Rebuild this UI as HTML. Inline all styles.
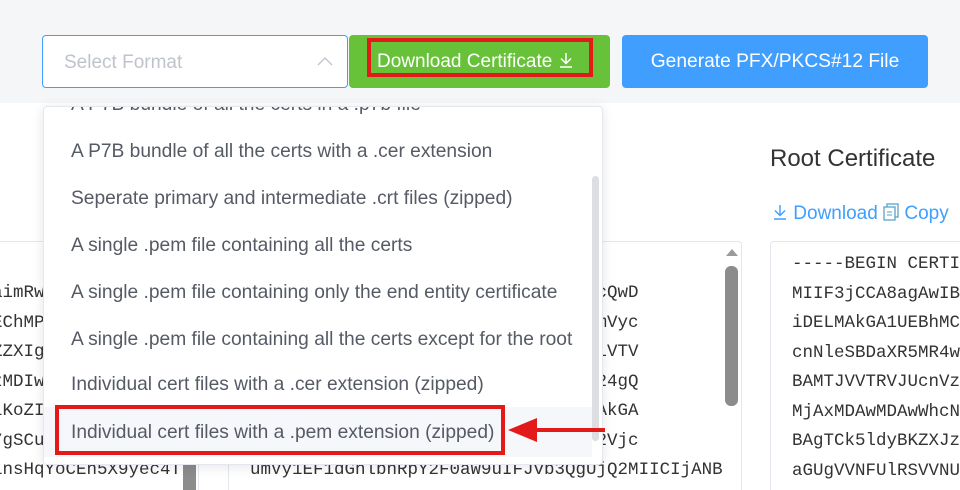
<!DOCTYPE html>
<html style="overflow:hidden;height:490px"><head><meta charset="utf-8"><style>
body{margin:0;width:960px;height:490px;overflow:hidden;background:#fff;font-family:"Liberation Sans",sans-serif;position:relative}
.band{position:absolute;left:0;top:0;width:960px;height:103px;background:#f5f6f8}
.sel{position:absolute;left:42px;top:35px;width:306px;height:53px;border:1px solid #409eff;border-radius:4px;background:#fff;box-sizing:border-box}
.sel span{position:absolute;left:21px;top:16px;font-size:19px;color:#bfc3cb}
.btn{position:absolute;border-radius:4px;color:#fff;font-size:19.2px;text-align:center;box-sizing:border-box}
.green{left:349px;top:35px;width:261px;height:53px;background:#67c23a}
.redbox{position:absolute;left:367px;top:38px;width:226px;height:39px;border:4px solid #e21a1a;box-sizing:border-box}
.blue{left:622px;top:35px;width:306px;height:53px;background:#409eff;line-height:53px}
.mono{font-family:"Liberation Mono",monospace;font-size:17.5px;color:#333;position:absolute;line-height:29.5px;white-space:pre;overflow:hidden}
.panel{position:absolute;border:1px solid #e4e7ed;border-bottom:none;border-radius:4px 4px 0 0;box-sizing:border-box}
.dd{position:absolute;left:43px;top:106px;width:558px;height:357px;background:#fff;border:1px solid #e4e7ed;border-radius:4px;box-shadow:0 2px 12px rgba(0,0,0,.1);overflow:hidden}
.it{position:absolute;left:27px;font-size:19.2px;color:#555a64;white-space:nowrap}
</style></head><body>
<div class="band"></div>
<div class="sel"><span>Select Format</span>
<svg style="position:absolute;left:274px;top:20px" width="16" height="12"><path d="M1 9 L8 2 L15 9" fill="none" stroke="#bfc3cb" stroke-width="1.3"/></svg></div>
<div class="btn green"></div>
<div class="redbox"></div>
<div style="position:absolute;left:377px;top:51px;font-size:19px;color:#fff">Download Certificate <svg width="16" height="16" style="vertical-align:-1px"><path d="M8 1 V11 M3 6.5 L8 11.5 L13 6.5 M2 15 H14" fill="none" stroke="#fff" stroke-width="1.5"/></svg></div>
<div class="btn blue">Generate PFX/PKCS#12 File</div>

<div style="position:absolute;left:770px;top:145px;font-size:24px;color:#333">Root Certificate</div>
<div style="position:absolute;left:772px;top:203px;font-size:19px;color:#409eff"><svg width="16" height="16" style="vertical-align:-1px"><path d="M8 1 V11 M3 6.5 L8 11.5 L13 6.5 M2 15 H14" fill="none" stroke="#409eff" stroke-width="1.4"/></svg> Download <svg width="16" height="18" style="vertical-align:-2px"><rect x="4" y="1" width="11" height="13" fill="none" stroke="#5aa3c8" stroke-width="1.3"/><rect x="1" y="4" width="11" height="13" fill="#fff" stroke="#5aa3c8" stroke-width="1.3"/><path d="M4 9H9M4 12H9" stroke="#5aa3c8"/></svg> Copy</div>

<div class="panel" style="left:-5px;top:241px;width:204px;height:249px"></div>
<div style="position:absolute;left:183px;top:440px;width:13px;height:50px;background:#8c8c8c"></div>
<div class="mono" style="left:-8px;top:279px;width:190px;height:211px">aimRw
EChMP
ZZXIg
zMDIw
lKoZI
7gSCu
insHqYoCEn5X9yec4T
ki.J6Bl.(q+Kf.1.EF5</div>

<div class="panel" style="left:228px;top:241px;width:514px;height:249px"></div>
<div style="position:absolute;left:725px;top:266px;width:13px;height:140px;background:#8c8c8c;border-radius:6px"></div>
<svg style="position:absolute;left:725px;top:247px" width="14" height="10"><path d="M1 9 L7 2 L13 9Z" fill="#9a9a9a"/></svg>
<div class="mono" style="left:250px;top:279px;width:472px;height:211px">                         q1hSVhgmcQwD
                         wpOZXcgSmVyc
                         FVTRVJUUlVTV
                         mljYXRpb24gQ
                         VowXzELMAkGA
                         1UEAxMtU2Vjc
umVy1EF1dGhlbnRpY2F0aW9uIFJvb3QgUjQ2MIICIjANB
A-DAMIICC-KCA-EAl77VNl2IDAE.iuQ.US</div>

<div class="panel" style="left:770px;top:241px;width:220px;height:249px"></div>
<div class="mono" style="left:792px;top:250px;width:168px;height:240px">-----BEGIN CERTI
MIIF3jCCA8agAwIB
iDELMAkGA1UEBhMC
cnNleSBDaXR5MR4w
BAMTJVVTRVJUcnVz
MjAxMDAwMDAwWhcN
BAgTCk5ldyBKZXJz
aGUgVVNFUlRSVVNU
dGlmaWNhdGlvbiBB</div>

<div class="dd">
<div class="it" style="top:-13px">A P7B bundle of all the certs in a .p7b file</div>
<div class="it" style="top:34px">A P7B bundle of all the certs with a .cer extension</div>
<div class="it" style="top:81px">Seperate primary and intermediate .crt files (zipped)</div>
<div class="it" style="top:128px">A single .pem file containing all the certs</div>
<div class="it" style="top:175px">A single .pem file containing only the end entity certificate</div>
<div class="it" style="top:222px">A single .pem file containing all the certs except for the root</div>
<div class="it" style="top:267px">Individual cert files with a .cer extension (zipped)</div>
<div style="position:absolute;left:0;top:300px;width:548px;height:50px;background:#f5f7fa"></div>
<div class="it" style="top:315px">Individual cert files with a .pem extension (zipped)</div>
<div style="position:absolute;left:548px;top:69px;width:7px;height:265px;background:#dcdee3;border-radius:4px"></div>
</div>
<div style="position:absolute;left:55px;top:405px;width:450px;height:50px;border:4px solid #e21a1a;box-sizing:border-box"></div>
<svg style="position:absolute;left:505px;top:415px" width="100" height="30"><path d="M30 15 H100" stroke="#e21a1a" stroke-width="4"/><path d="M3 15 L32 3 L32 27Z" fill="#e21a1a"/></svg>
</body></html>
